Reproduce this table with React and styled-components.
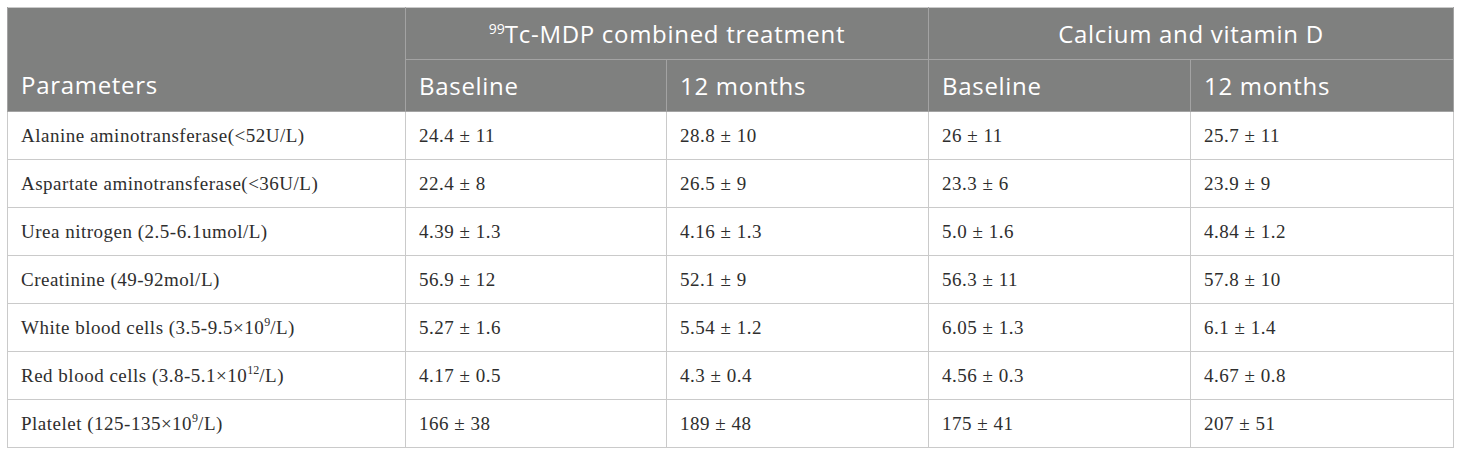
import React from 'react';
import styled, { createGlobalStyle } from 'styled-components';

const GlobalStyle = createGlobalStyle`
  html, body {
    margin: 0;
    padding: 0;
    background: #ffffff;
  }
  body {
    padding: 7px 0 0 7px;
  }
`;

const Table = styled.table`
  width: 1446px;
  border-collapse: collapse;
  table-layout: fixed;
  border: 1px solid #cacaca;
`;

const Col = styled.col`
  width: ${({ $w }) => $w}px;
`;

const HeadCell = styled.th`
  background: #7f807f;
  color: #ffffff;
  font-family: "Open Sans", "Noto Sans", sans-serif;
  font-weight: 400;
  font-size: 24px;
  letter-spacing: 0.7px;
  height: 51px;
  padding: 0 13px;
  text-align: ${({ $center }) => ($center ? 'center' : 'left')};
  vertical-align: ${({ $bottom }) => ($bottom ? 'bottom' : 'middle')};
  border: 1px solid #a3a3a3;
  border-top: none;
  ${({ $bottom }) => $bottom && 'padding-bottom: 10px;'}
  sup {
    font-size: 14px;
    letter-spacing: 0;
    vertical-align: 9px;
    line-height: 0;
  }
`;

const Cell = styled.td`
  font-family: "Liberation Serif", "Times New Roman", serif;
  font-size: 19px;
  letter-spacing: 0.5px;
  color: #2e2e2e;
  height: 47px;
  padding: 0 13px;
  border: 1px solid #cacaca;
  vertical-align: middle;
  white-space: nowrap;
  sup {
    font-size: 12px;
    letter-spacing: 0;
    vertical-align: 8px;
    line-height: 0;
  }
`;

const widths = [398, 261, 262, 262, 263];

const rows = [
  ['Alanine aminotransferase(<52U/L)', '24.4 ± 11', '28.8 ± 10', '26 ± 11', '25.7 ± 11'],
  ['Aspartate aminotransferase(<36U/L)', '22.4 ± 8', '26.5 ± 9', '23.3 ± 6', '23.9 ± 9'],
  ['Urea nitrogen (2.5-6.1umol/L)', '4.39 ± 1.3', '4.16 ± 1.3', '5.0 ± 1.6', '4.84 ± 1.2'],
  ['Creatinine (49-92mol/L)', '56.9 ± 12', '52.1 ± 9', '56.3 ± 11', '57.8 ± 10'],
  [<>White blood cells (3.5-9.5×10<sup>9</sup>/L)</>, '5.27 ± 1.6', '5.54 ± 1.2', '6.05 ± 1.3', '6.1 ± 1.4'],
  [<>Red blood cells (3.8-5.1×10<sup>12</sup>/L)</>, '4.17 ± 0.5', '4.3 ± 0.4', '4.56 ± 0.3', '4.67 ± 0.8'],
  [<>Platelet (125-135×10<sup>9</sup>/L)</>, '166 ± 38', '189 ± 48', '175 ± 41', '207 ± 51'],
];

export default function App() {
  return (
    <>
      <GlobalStyle />
      <Table>
        <colgroup>
          {widths.map((w, i) => (
            <Col key={i} $w={w} />
          ))}
        </colgroup>
        <thead>
          <tr>
            <HeadCell rowSpan={2} $bottom>Parameters</HeadCell>
            <HeadCell colSpan={2} $center><sup>99</sup>Tc-MDP combined treatment</HeadCell>
            <HeadCell colSpan={2} $center>Calcium and vitamin D</HeadCell>
          </tr>
          <tr>
            <HeadCell>Baseline</HeadCell>
            <HeadCell>12 months</HeadCell>
            <HeadCell>Baseline</HeadCell>
            <HeadCell>12 months</HeadCell>
          </tr>
        </thead>
        <tbody>
          {rows.map((row, i) => (
            <tr key={i}>
              {row.map((value, j) => (
                <Cell key={j}>{value}</Cell>
              ))}
            </tr>
          ))}
        </tbody>
      </Table>
    </>
  );
}
